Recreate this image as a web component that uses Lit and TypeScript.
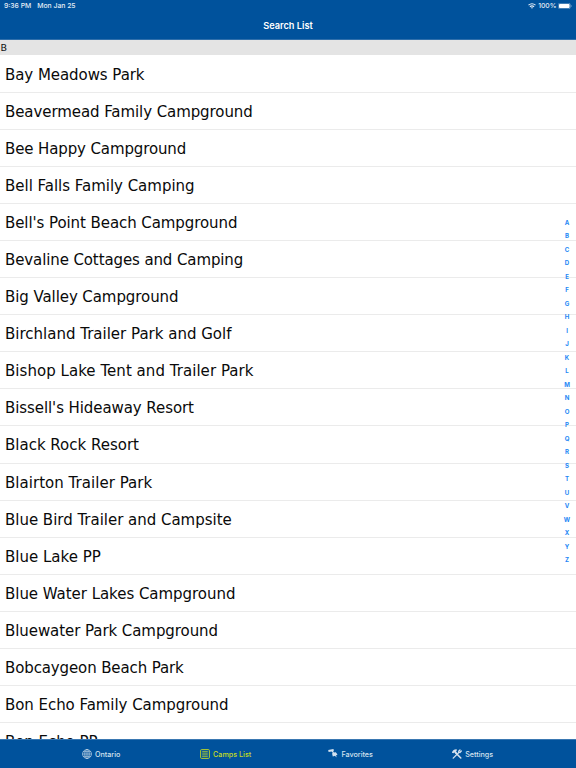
import { LitElement, html, css, svg } from "lit";
import { customElement, state } from "lit/decorators.js";
import { classMap } from "lit/directives/class-map.js";
import { styleMap } from "lit/directives/style-map.js";

// Camp name and its letter tracking in pixels
const CAMPS: [string, number][] = [
  ["Bay Meadows Park", -0.06],
  ["Beavermead Family Campground", -0.08],
  ["Bee Happy Campground", -0.12],
  ["Bell Falls Family Camping", -0.02],
  ["Bell's Point Beach Campground", -0.08],
  ["Bevaline Cottages and Camping", -0.11],
  ["Big Valley Campground", -0.08],
  ["Birchland Trailer Park and Golf", 0],
  ["Bishop Lake Tent and Trailer Park", 0.04],
  ["Bissell's Hideaway Resort", -0.08],
  ["Black Rock Resort", 0],
  ["Blairton Trailer Park", 0.03],
  ["Blue Bird Trailer and Campsite", -0.02],
  ["Blue Lake PP", 0],
  ["Blue Water Lakes Campground", -0.04],
  ["Bluewater Park Campground", -0.07],
  ["Bobcaygeon Beach Park", -0.12],
  ["Bon Echo Family Campground", -0.05],
  ["Bon Echo PP", -0.05],
];

const LETTERS = "ABCDEFGHIJKLMNOPQRSTUVWXYZ".split("");

const globe = svg`<g fill="none" stroke="currentColor" stroke-width=".6">
  <circle cx="5" cy="5" r="4.5"/><ellipse cx="5" cy="5" rx="2.2" ry="4.5"/>
  <path d="M5 .5v9M.5 5h9M1.2 2.7h7.6M1.2 7.3h7.6"/></g>`;
const list = svg`<g fill="none" stroke="currentColor" stroke-width=".9">
  <rect x=".6" y=".6" width="8.8" height="8.8" rx="1"/>
  <path d="M2.2 2.8h5.6M2.2 5h5.6M2.2 7.2h5.6"/></g>`;
const pin = svg`<g fill="currentColor">
  <path d="M.2.9 5.4 0l.6 1.5-.9.6.8 1.3 1.9-.1 1.7 2.2-1.5.9.6 1.7-.5.2-1-1.6-2.3.9-.7-2.9.6-1.1L3.5 2.5l-2.9.4z"/></g>`;
const tools = svg`<g fill="none" stroke="currentColor" stroke-linecap="round">
  <path stroke-width="1.5" d="M3.5 3.6 8.8 9"/>
  <path stroke-width="1.8" stroke-linecap="butt" d="M.7 3.9C1.2 2.1 2.7 1 4.7 1.1M2.3 2l2 2"/>
  <path stroke-width="1.3" d="M1.2 9.1 6.8 3.5"/>
  <path stroke-width="1.3" d="M8 .9 6.7 2.3l.2 1 1 .2L9.3 2"/></g>`;

const TABS = [
  { id: "ontario", label: "Ontario", icon: globe },
  { id: "camps", label: "Camps List", icon: list },
  { id: "favorites", label: "Favorites", icon: pin },
  { id: "settings", label: "Settings", icon: tools },
];

@customElement("app-root")
export class AppRoot extends LitElement {
  @state() private tab = "camps";

  static styles = css`
    :host {
      display: flex;
      flex-direction: column;
      position: relative;
      width: 576px;
      height: 768px;
      overflow: hidden;
      background: #fff;
      font-family: Inter, "Liberation Sans", sans-serif;
    }
    .top {
      flex: none;
      height: 40px;
      box-sizing: border-box;
      background: #00529c;
      border-bottom: 1px solid #2f6fab;
      color: #fff;
    }
    .status {
      display: flex;
      align-items: center;
      height: 11.6px;
      padding: 0 4px;
      font-size: 6.8px;
      font-weight: 500;
      white-space: pre;
      color: #e4edf6;
    }
    .date { margin-left: 6px; flex: 1; }
    .wifi { width: 8px; height: 6px; margin-right: 2px; }
    .battery { width: 14px; height: 6px; margin-left: 1.5px; }
    .title {
      height: 27.4px;
      line-height: 27.4px;
      text-align: center;
      font-size: 9.2px;
      font-weight: 600;
    }
    .section {
      flex: none;
      height: 15px;
      padding-left: 0.5px;
      background: #e4e4e4;
      font: 9.5px/16px "DejaVu Sans", sans-serif;
      color: #111;
    }
    .rows {
      flex: 1;
      min-height: 0;
      overflow: hidden;
      box-sizing: border-box;
      padding-top: 0.5px;
    }
    .row {
      height: 37.1px;
      box-sizing: border-box;
      padding-left: 5px;
      border-bottom: 1px solid #ebebeb;
      font: 15px/38.6px "DejaVu Sans", sans-serif;
      color: #0a0a0a;
      white-space: nowrap;
    }
    .index {
      position: absolute;
      right: 3px;
      top: 215.8px;
      width: 12px;
      text-align: center;
      font-size: 6.1px;
      font-weight: 700;
      line-height: 13.5px;
      color: #2487f5;
    }
    .tabs {
      flex: none;
      display: grid;
      grid-template-columns: 125px 124px 126px 118px;
      padding: 0 0 0 38.5px;
      height: 29px;
      box-sizing: border-box;
      border-top: 1px solid #3a78b2;
      background: #00529c;
      color: #d5e2ef;
      font-size: 7.2px;
      font-weight: 500;
    }
    .tab {
      display: flex;
      align-items: center;
      justify-content: center;
      gap: 3.3px;
    }
    .tab.active { color: #c5dc22; }
    .icon { width: 10px; height: 10px; }
  `;

  render() {
    return html`
      <header class="top">
        <div class="status">
          <span>9:36 PM</span><span class="date">Mon Jan 25</span>
          <svg class="wifi" viewBox="0 0 8 6" fill="none" stroke="currentColor">
            <path d="M.5 2.2Q4-.8 7.5 2.2M1.9 3.7Q4 2 6.1 3.7" stroke-width="1.1" />
            <path d="M2.9 4.6Q4 3.7 5.1 4.6L4 5.8z" fill="currentColor" stroke="none" />
          </svg>
          <span>100%</span>
          <svg class="battery" viewBox="0 0 14 6">
            <rect x=".3" y=".3" width="12" height="5.4" rx="1.4" fill="none" stroke="#8db1d3" stroke-width=".6" />
            <rect x="1" y="1" width="10.6" height="4" rx=".8" fill="#fff" />
            <path d="M12.9 2v2q.8-.3.8-1t-.8-1" fill="#8db1d3" />
          </svg>
        </div>
        <div class="title">Search List</div>
      </header>
      <div class="section">B</div>
      <main class="rows">
        ${CAMPS.map(
          ([name, tracking]) =>
            html`<div class="row" style=${styleMap({ letterSpacing: `${tracking}px` })}>${name}</div>`
        )}
      </main>
      <nav class="index">${LETTERS.map((l) => html`<div>${l}</div>`)}</nav>
      <footer class="tabs">
        ${TABS.map(
          (t) => html`<div
            class=${classMap({ tab: true, active: t.id === this.tab })}
            @click=${() => (this.tab = t.id)}
          >
            <svg class="icon" viewBox="0 0 10 10">${t.icon}</svg><span>${t.label}</span>
          </div>`
        )}
      </footer>
    `;
  }
}
